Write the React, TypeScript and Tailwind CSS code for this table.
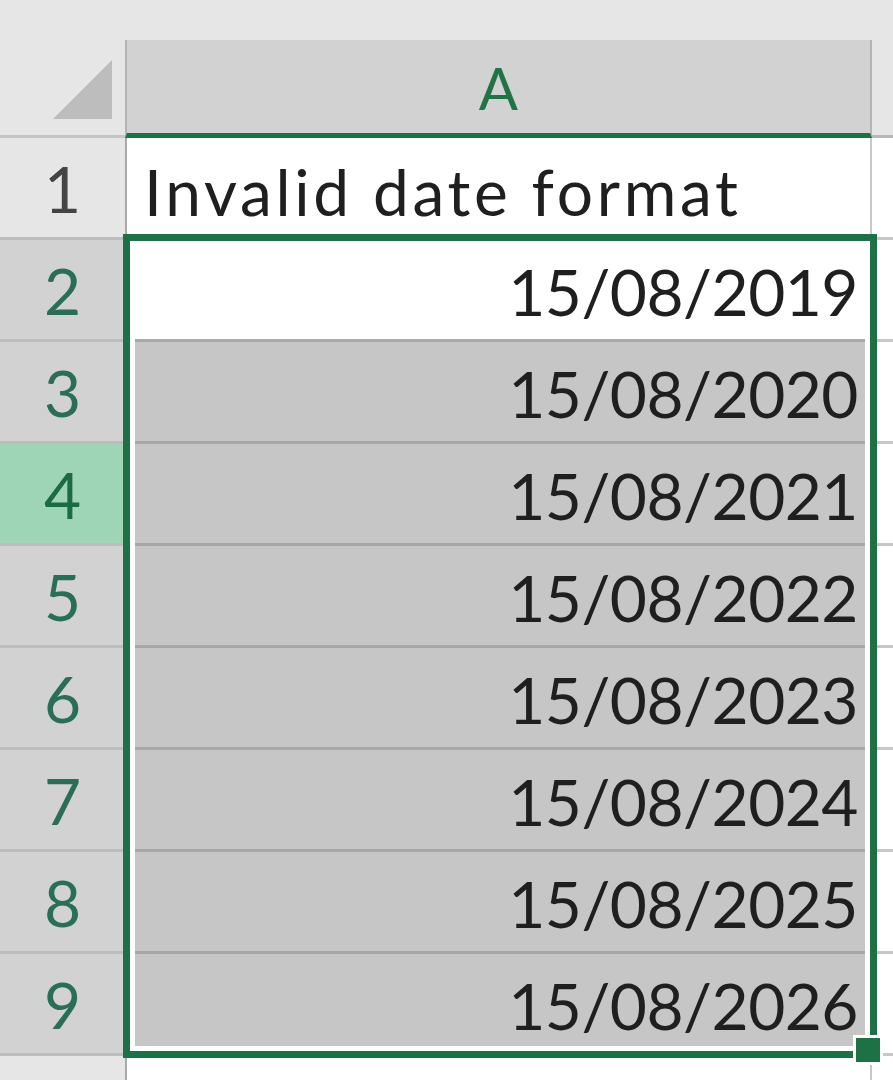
import React from "react";

const rows = [
  { n: 1, text: "Invalid date format", kind: "plain" },
  { n: 2, text: "15/08/2019", kind: "active" },
  { n: 3, text: "15/08/2020", kind: "sel" },
  { n: 4, text: "15/08/2021", kind: "sel", cur: true },
  { n: 5, text: "15/08/2022", kind: "sel" },
  { n: 6, text: "15/08/2023", kind: "sel" },
  { n: 7, text: "15/08/2024", kind: "sel" },
  { n: 8, text: "15/08/2025", kind: "sel" },
  { n: 9, text: "15/08/2026", kind: "sel" },
];

export default function App() {
  return (
    <div
      className="relative w-[893px] h-[1080px] overflow-hidden bg-white"
      style={{ fontFamily: "Lato, 'Open Sans', sans-serif" }}
    >
      {/* header row */}
      <div className="flex h-[138px] bg-[#e6e6e6]">
        <div className="w-[125px] flex justify-end items-end pr-[13px] pb-[16px] border-b-[3px] border-[#c4c4c4]">
          <svg width="59" height="59" viewBox="0 0 59 59">
            <polygon points="0,59 59,0 59,59" fill="#bdbdbd" />
          </svg>
        </div>
        <div className="self-end h-[98px] w-[747px] bg-[#d2d2d2] border-l-[2px] border-l-[#b4b4b4] border-r-[2px] border-r-[#b4b4b4] border-b-[5px] border-b-[#1e7145] flex items-center justify-center">
          <span className="text-[58px] leading-none text-[#217346] pt-[2px]">A</span>
        </div>
        <div className="flex-1 border-b-[3px] border-[#b8b8b8]" />
      </div>

      {/* data rows */}
      {rows.map((r) => {
        const headerBg = r.cur
          ? "bg-[#9fd5b7] text-[#1b6b43]"
          : r.kind === "plain"
          ? "bg-[#e6e6e6] text-[#444444]"
          : "bg-[#d2d2d2] text-[#2a6e58]";
        const cellBg = r.kind === "sel" ? "bg-[#c6c6c6]" : "bg-white";
        const align =
          r.kind === "plain"
            ? "justify-start pl-[17px] tracking-[3.7px] pb-[13px]"
            : "justify-end pr-[12px] tracking-[-0.5px] pb-[15px]";
        return (
          <div key={r.n} className="flex h-[102px]">
            <div
              className={`w-[127px] border-r-[2px] border-r-[#a9a9a9] border-b-[3px] border-b-[#bdbdbd] flex items-end justify-center pb-[16px] ${headerBg}`}
            >
              <span className="text-[64px] leading-none">{r.n}</span>
            </div>
            <div
              className={`w-[745px] border-r-[2px] border-r-[#c8c8c8] border-b-[3px] border-b-[#a8a8a8] flex items-end ${align} ${cellBg}`}
            >
              <span className="text-[64px] leading-none text-[#1f1f1f]">{r.text}</span>
            </div>
            <div className="flex-1 border-b-[3px] border-[#c8c8c8]" />
          </div>
        );
      })}

      {/* row 10 */}
      <div className="flex h-[40px]">
        <div className="w-[127px] bg-[#e6e6e6] border-r-[2px] border-r-[#a9a9a9]" />
        <div className="w-[745px] border-r-[2px] border-r-[#c8c8c8]" />
        <div className="flex-1" />
      </div>

      {/* selection overlay */}
      <div className="absolute left-[123px] top-[234px] w-[754px] h-[824px] border-[7px] border-[#1e7145] shadow-[inset_0_0_0_5px_white]" />
      {/* fill handle */}
      <div className="absolute left-[853px] top-[1035px] w-[30px] h-[30px] border-[3px] border-white bg-[#1e7145]" />
    </div>
  );
}
